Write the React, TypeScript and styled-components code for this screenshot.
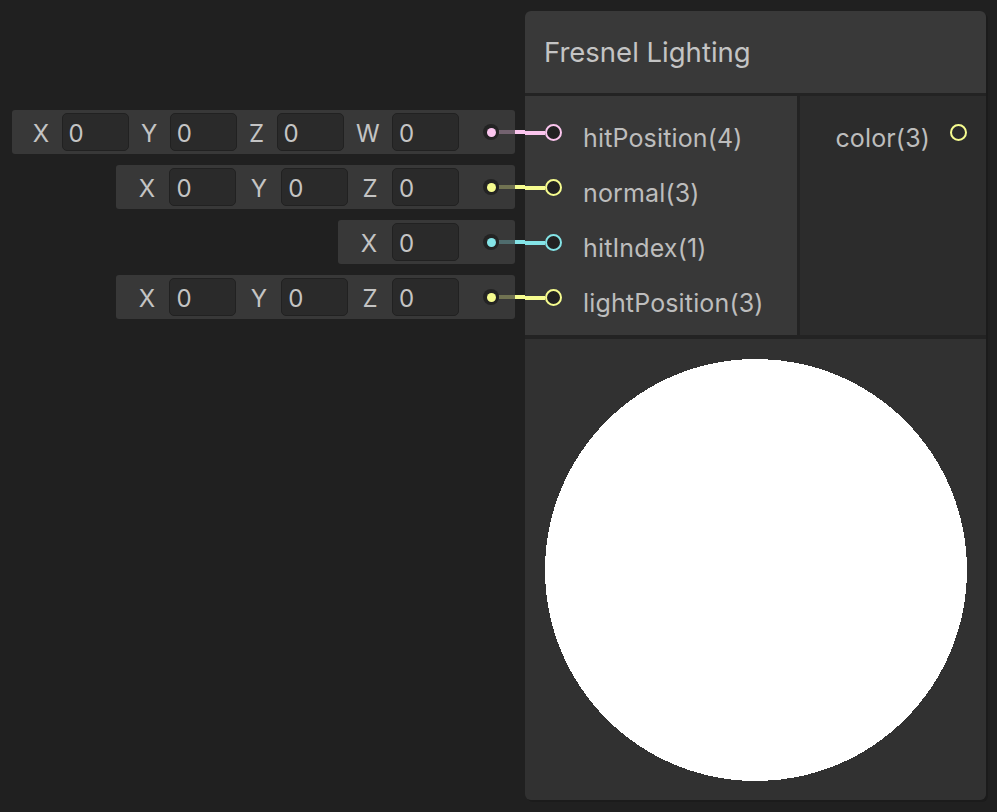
import React from "react";
import styled, { createGlobalStyle } from "styled-components";

const GlobalStyle = createGlobalStyle`
  html, body {
    margin: 0;
    padding: 0;
    background: #202020;
  }
  body {
    font-family: Inter, "Noto Sans", "Liberation Sans", sans-serif;
    color: #c4c4c4;
  }
`;

const colors = {
  vec4: "#fbc5ee",
  vec3: "#f6fc8f",
  vec1: "#84e4e7",
};

type Port = {
  name: string;
  color: string;
  fields: string[];
};

const inputs: Port[] = [
  { name: "hitPosition(4)", color: colors.vec4, fields: ["X", "Y", "Z", "W"] },
  { name: "normal(3)", color: colors.vec3, fields: ["X", "Y", "Z"] },
  { name: "hitIndex(1)", color: colors.vec1, fields: ["X"] },
  { name: "lightPosition(3)", color: colors.vec3, fields: ["X", "Y", "Z"] },
];

// label spacing used by unity differs a little with the field count
const labelSpace: Record<number, number> = { 1: 15, 3: 14.3, 4: 12.4 };

const Canvas = styled.div`
  display: flex;
  align-items: flex-start;
  width: 997px;
  height: 812px;
  padding-top: 11px;
  box-sizing: border-box;
  overflow: hidden;
`;

const FieldColumn = styled.div`
  display: flex;
  flex-direction: column;
  align-items: flex-end;
  gap: 11px;
  width: 525px;
  margin-top: 99px;
`;

const FieldRow = styled.div`
  display: flex;
  align-items: center;
`;

const FieldBox = styled.div`
  display: flex;
  align-items: center;
  height: 44px;
  box-sizing: border-box;
  padding-left: 8px;
  background: #383838;
  border-radius: 3px;
`;

const AxisLabel = styled.span<{ $space: number }>`
  font-size: 24px;
  color: #c4c4c4;
  margin: 2px ${(p) => p.$space}px 0;
`;

const NumberInput = styled.div`
  width: 67px;
  height: 38px;
  box-sizing: border-box;
  padding: 2px 0 0 6px;
  display: flex;
  align-items: center;
  background: #2a2a2a;
  border: 1px solid #212121;
  border-radius: 5px;
  font-size: 24px;
  color: #c4c4c4;
`;

const DotArea = styled.div`
  display: flex;
  align-items: center;
  margin-left: 24px;
`;

const Dot = styled.div<{ $color: string }>`
  width: 16px;
  height: 16px;
  border-radius: 50%;
  background: #232323;
  display: flex;
  align-items: center;
  justify-content: center;
  &::after {
    content: "";
    width: 9px;
    height: 9px;
    border-radius: 50%;
    background: ${(p) => p.$color};
  }
`;

const DimLine = styled.div<{ $color: string }>`
  width: 16px;
  height: 4px;
  background: ${(p) => p.$color};
  opacity: 0.3;
`;

const Wire = styled.div<{ $color: string; $w: number }>`
  width: ${(p) => p.$w}px;
  height: 4px;
  background: ${(p) => p.$color};
  flex-shrink: 0;
`;

const Node = styled.div`
  width: 461px;
  display: flex;
  flex-direction: column;
  background: #232323;
  border-radius: 6px;
  box-shadow: 2px 2px 0 #1b1b1b;
`;

const Title = styled.div`
  height: 82px;
  display: flex;
  align-items: center;
  padding-left: 19px;
  background: #393939;
  border-radius: 6px 6px 0 0;
  font-size: 27.5px;
  color: #c4c4c4;
  margin-bottom: 3px;
`;

const PortSection = styled.div`
  display: flex;
  gap: 3px;
  height: 239px;
`;

const InputColumn = styled.div`
  width: 272px;
  box-sizing: border-box;
  padding: 9px 0 10px;
  background: #383838;
`;

const OutputColumn = styled.div`
  flex: 1;
  box-sizing: border-box;
  padding: 9px 0 10px;
  background: #2c2c2c;
`;

const PortRow = styled.div<{ $right?: boolean }>`
  height: 55px;
  display: flex;
  align-items: center;
  justify-content: ${(p) => (p.$right ? "flex-end" : "flex-start")};
  padding-right: ${(p) => (p.$right ? "19px" : "0")};
`;

const Ring = styled.div<{ $color: string; $hollow?: boolean }>`
  width: 17px;
  height: 17px;
  box-sizing: border-box;
  border-radius: 50%;
  border: 2px solid ${(p) => p.$color};
  background: ${(p) => (p.$hollow ? "transparent" : "#222222")};
  flex-shrink: 0;
`;

const PortLabel = styled.span<{ $right?: boolean }>`
  font-size: 25px;
  letter-spacing: 0.15px;
  color: #bdbdbd;
  padding-top: 11px;
  margin-left: ${(p) => (p.$right ? "0" : "21px")};
  margin-right: ${(p) => (p.$right ? "20px" : "0")};
`;

const Preview = styled.div`
  margin-top: 4px;
  height: 461px;
  display: flex;
  align-items: center;
  justify-content: center;
  background: #313131;
  border-radius: 0 0 6px 6px;
`;

function InputFields({ port }: { port: Port }) {
  const space = labelSpace[port.fields.length] ?? 14;
  return (
    <FieldRow>
      <FieldBox>
        {port.fields.map((f) => (
          <React.Fragment key={f}>
            <AxisLabel $space={space}>{f}</AxisLabel>
            <NumberInput>0</NumberInput>
          </React.Fragment>
        ))}
        <DotArea>
          <Dot $color={port.color} />
          <DimLine $color={port.color} />
        </DotArea>
      </FieldBox>
      <Wire $color={port.color} $w={10} />
    </FieldRow>
  );
}

export default function App() {
  return (
    <>
      <GlobalStyle />
      <Canvas>
        <FieldColumn>
          {inputs.map((p) => (
            <InputFields key={p.name} port={p} />
          ))}
        </FieldColumn>
        <Node>
          <Title>Fresnel Lighting</Title>
          <PortSection>
            <InputColumn>
              {inputs.map((p) => (
                <PortRow key={p.name}>
                  <Wire $color={p.color} $w={20} />
                  <Ring $color={p.color} />
                  <PortLabel>{p.name}</PortLabel>
                </PortRow>
              ))}
            </InputColumn>
            <OutputColumn>
              <PortRow $right>
                <PortLabel $right>color(3)</PortLabel>
                <Ring $color={colors.vec3} $hollow />
              </PortRow>
            </OutputColumn>
          </PortSection>
          <Preview>
            <svg width="422" height="422" viewBox="0 0 422 422">
              <circle cx="211" cy="211" r="211" fill="#ffffff" shapeRendering="crispEdges" />
            </svg>
          </Preview>
        </Node>
      </Canvas>
    </>
  );
}
